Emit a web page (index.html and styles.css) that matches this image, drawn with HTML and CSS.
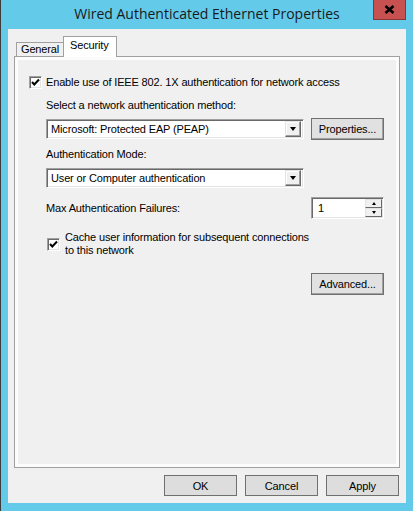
FILE: index.html
```html
<!DOCTYPE html>
<html lang="en">
<head>
  <meta charset="UTF-8" />
  <title>Wired Authenticated Ethernet Properties</title>
  <link rel="stylesheet" href="styles.css">
</head>
<body>
  <div class="window">
    <div class="titlebar">
      <span></span>
      <div class="title">Wired Authenticated Ethernet Properties</div>
      <div class="close">
        <svg width="11" height="9" viewBox="0 0 11 9"><path d="M1.5 1 L9.5 8 M9.5 1 L1.5 8" stroke="#000" stroke-width="2.6" fill="none"/></svg>
      </div>
    </div>

    <div class="client">
      <div class="tabs">
        <div class="tab">General</div>
        <div class="tab active">Security</div>
      </div>

      <div class="panel">
        <div class="check-row">
          <span class="check"><svg width="11" height="11" viewBox="0 0 11 11"><polyline points="2,5 4.3,7.5 9,2.5" stroke="#000" stroke-width="2" fill="none"/></svg></span>
          <span>Enable use of IEEE 802. 1X authentication for network access</span>
        </div>

        <div class="section">
          <div class="label first">Select a network authentication method:</div>
          <div class="combo-row">
            <div class="combo"><span>Microsoft: Protected EAP (PEAP)</span><span class="arrow"><i class="tri"></i></span></div>
            <button class="btn">Properties...</button>
          </div>

          <div class="label mode">Authentication Mode:</div>
          <div class="combo-row">
            <div class="combo"><span>User or Computer authentication</span><span class="arrow"><i class="tri"></i></span></div>
          </div>

          <div class="spin-row">
            <span>Max Authentication Failures:</span>
            <div class="spin">
              <span>1</span>
              <div class="spin-btns">
                <span class="spin-btn"><i class="tri up"></i></span>
                <span class="spin-btn"><i class="tri small"></i></span>
              </div>
            </div>
          </div>

          <div class="check-row cache">
            <span class="check"><svg width="11" height="11" viewBox="0 0 11 11"><polyline points="2,5 4.3,7.5 9,2.5" stroke="#000" stroke-width="2" fill="none"/></svg></span>
            <span>Cache user information for subsequent connections<br>to this network</span>
          </div>

          <div class="adv-row">
            <button class="btn">Advanced...</button>
          </div>
        </div>
      </div>

      <div class="actions">
        <button class="btn">OK</button>
        <button class="btn">Cancel</button>
        <button class="btn">Apply</button>
      </div>
    </div>
  </div>
</body>
</html>
```

FILE: styles.css
```css
* {
  box-sizing: border-box;
}
body {
  margin: 0;
  width: 413px;
  height: 511px;
  overflow: hidden;
  font-family: "Liberation Sans", Arial, sans-serif;
  font-size: 11px;
  letter-spacing: -0.15px;
  color: #000;
}
.window {
  height: 511px;
  background-color: #63caea;
  border-left: 1px solid #3c3c3c;
  padding: 0 7px 8px 7px;
  display: flex;
  flex-direction: column;
}
.titlebar {
  height: 29px;
  display: grid;
  grid-template-columns: 1fr auto 1fr;
  align-items: start;
}
.title {
  font-family: "Open Sans", "Noto Sans", sans-serif;
  font-size: 14px;
  letter-spacing: 0;
  line-height: 27px;
  color: #1a1a1a;
  white-space: nowrap;
}
.close {
  justify-self: end;
  width: 33px;
  height: 20px;
  background-color: #c75050;
  border: 1px solid #8a3434;
  border-top: none;
  display: flex;
  align-items: center;
  justify-content: center;
}
.client {
  flex: 1;
  background-color: #f0f0f0;
  padding: 7px 6px 0 6px;
}
.tabs {
  height: 20px;
  display: flex;
  align-items: flex-end;
  padding-left: 2px;
}
.tab {
  height: 14px;
  width: 47px;
  border: 1px solid #a0a0a0;
  border-bottom: none;
  border-right: none;
  padding-left: 4px;
  line-height: 13px;
  background-color: #f0f0f0;
}
.tab.active {
  position: relative;
  height: 21px;
  width: 54px;
  margin-bottom: -1px;
  border-right: 1px solid #a0a0a0;
  background-color: #fff;
  padding-left: 6px;
  line-height: 17px;
}
.panel {
  height: 412px;
  border: 1px solid #a0a0a0;
  background-color: #f0f0f0;
  box-shadow: inset 0 0 0 3px #fcfcfc;
  padding: 19px 0 0 14px;
}
.check-row {
  display: flex;
  align-items: center;
  gap: 4px;
  line-height: 13px;
}
.check {
  width: 13px;
  height: 13px;
  flex: none;
  background-color: #fff;
  border: 1px solid;
  border-color: #a0a0a0 #fff #fff #a0a0a0;
  box-shadow: inset 1px 1px 0 #696969, inset -1px -1px 0 #e3e3e3;
  display: flex;
  align-items: center;
  justify-content: center;
}
.section {
  margin-left: 17px;
  width: 338px;
}
.label {
  line-height: 13px;
}
.label.first {
  margin-top: 10px;
}
.label.mode {
  margin-top: 8px;
}
.combo-row {
  margin-top: 6px;
  display: flex;
  align-items: center;
  gap: 7px;
  height: 22px;
}
.combo {
  width: 258px;
  height: 20px;
  background-color: #fff;
  border: 1px solid;
  border-color: #a0a0a0 #fff #fff #a0a0a0;
  box-shadow: inset 1px 1px 0 #696969, inset -1px -1px 0 #e3e3e3;
  display: flex;
  align-items: center;
  justify-content: space-between;
  padding: 1px 2px 1px 4px;
}
.arrow {
  width: 16px;
  height: 16px;
  background-color: #f0f0f0;
  border: 1px solid;
  border-color: #e3e3e3 #696969 #696969 #e3e3e3;
  box-shadow: inset -1px -1px 0 #a0a0a0, inset 1px 1px 0 #fff;
  display: flex;
  align-items: center;
  justify-content: center;
}
.tri {
  width: 0;
  height: 0;
  border-left: 3.5px solid transparent;
  border-right: 3.5px solid transparent;
  border-top: 4px solid #000;
}
.tri.small {
  border-left-width: 2.5px;
  border-right-width: 2.5px;
  border-top-width: 3px;
}
.tri.up {
  border-left: 2.5px solid transparent;
  border-right: 2.5px solid transparent;
  border-top: none;
  border-bottom: 3px solid #000;
}
.btn {
  width: 73px;
  height: 22px;
  padding: 0;
  font-family: "Liberation Sans", Arial, sans-serif;
  font-size: 11px;
  letter-spacing: -0.15px;
  color: #000;
  background-color: #e1e1e1;
  border: 1px solid #707070;
  box-shadow: inset -1px -1px 0 #a0a0a0;
}
.spin-row {
  margin-top: 8px;
  height: 22px;
  display: flex;
  align-items: center;
  justify-content: space-between;
}
.spin {
  width: 73px;
  height: 22px;
  background-color: #fff;
  border: 1px solid;
  border-color: #a0a0a0 #fff #fff #a0a0a0;
  box-shadow: inset 1px 1px 0 #696969, inset -1px -1px 0 #e3e3e3;
  display: flex;
  align-items: center;
  justify-content: space-between;
  padding: 1px 1px 1px 6px;
}
.spin-btns {
  display: flex;
  flex-direction: column;
  height: 18px;
}
.spin-btn {
  width: 17px;
  height: 9px;
  background-color: #f0f0f0;
  border: 1px solid;
  border-color: #e3e3e3 #696969 #696969 #e3e3e3;
  display: flex;
  align-items: center;
  justify-content: center;
}
.check-row.cache {
  margin-top: 12px;
  margin-left: 1px;
  gap: 5px;
}
.adv-row {
  margin-top: 16px;
  display: flex;
  justify-content: flex-end;
}
.actions {
  margin-top: 7px;
  display: flex;
  justify-content: flex-end;
  gap: 8px;
  padding-right: 1px;
}
.actions .btn {
  height: 21px;
  background-color: #dddddd;
  box-shadow: none;
}
```
